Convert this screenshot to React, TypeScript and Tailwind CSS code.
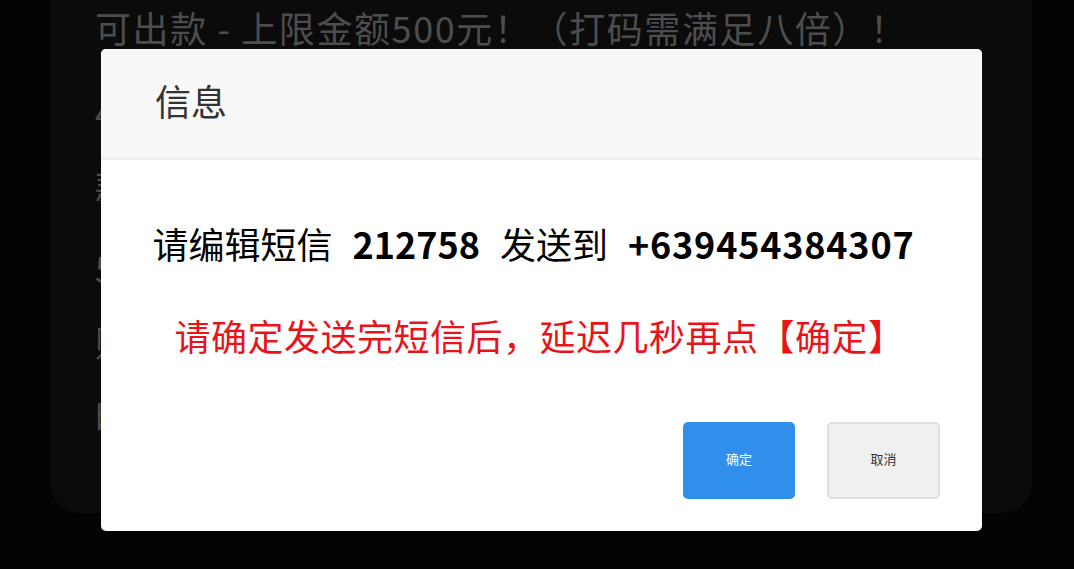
import React from "react";

const para2 = ["4.每日首存赠送彩金，完成指定流水后即可申请出", "款，详情请咨询在线客服人员，谢谢您的支持。"];
const para3 = [
  "5.本活动仅限真实玩家参与，同一IP同一设备的会员",
  "账号视为同一人，系统将自动进行风控审核与识别",
  "时请勿重复申请，否则将取消优惠资格。",
];

export default function App() {
  return (
    <div className="relative w-[1074px] h-[569px] overflow-hidden bg-[#030303] font-['Noto_Sans_CJK_SC',sans-serif]">
      {/* Page behind the dialog */}
      <div className="absolute left-[50px] top-[-200px] w-[982px] h-[713px] rounded-[30px] bg-[#0b0b0b] overflow-hidden">
        <div className="pt-[190px] pl-[45px] text-[36px] leading-[74px] tracking-[1.6px] text-[#4d4d4d] whitespace-nowrap">
          <div>可出款 - 上限金额500元！（打码需满足八倍）！</div>
          <div className="mt-[10px]">
            {para2.map((l) => (
              <div key={l}>{l}</div>
            ))}
          </div>
          <div className="mt-[8px]">
            {para3.map((l) => (
              <div key={l}>{l}</div>
            ))}
          </div>
        </div>
      </div>

      {/* Dialog */}
      <div className="absolute left-[101px] top-[49px] w-[881px] h-[482px] rounded-[5px] bg-white overflow-hidden flex flex-col">
        <div className="h-[111px] shrink-0 bg-[#f8f8f8] border-b-2 border-[#ededed] flex items-center pl-[54px] pb-[8px]">
          <span className="text-[36px] text-[#333] leading-none">信息</span>
        </div>
        <div className="flex-1 flex flex-col pt-[59px] pl-[40px] pr-[56px]">
          <div className="text-center text-[36px] leading-[48px] text-black whitespace-nowrap">
            请编辑短信<span className="font-bold mx-[20px]">212758</span>发送到
            <span className="font-bold ml-[20px] tracking-[0.8px]">+639454384307</span>
          </div>
          <div className="mt-[44px] pl-[12px] text-center text-[36px] leading-[48px] tracking-[0.5px] text-[#e8141a] whitespace-nowrap">
            请确定发送完短信后，延迟几秒再点【确定】
          </div>
        </div>
        <div className="flex justify-end gap-[32px] pr-[42px] pb-[32px]">
          <button className="w-[112px] h-[77px] rounded-[5px] bg-[#2f8fea] text-white text-[13px] pb-[3px]">
            确定
          </button>
          <button className="w-[113px] h-[77px] rounded-[5px] bg-[#f0f0f0] border-2 border-[#dedede] text-[#333] text-[13px] pb-[3px]">
            取消
          </button>
        </div>
      </div>
    </div>
  );
}
